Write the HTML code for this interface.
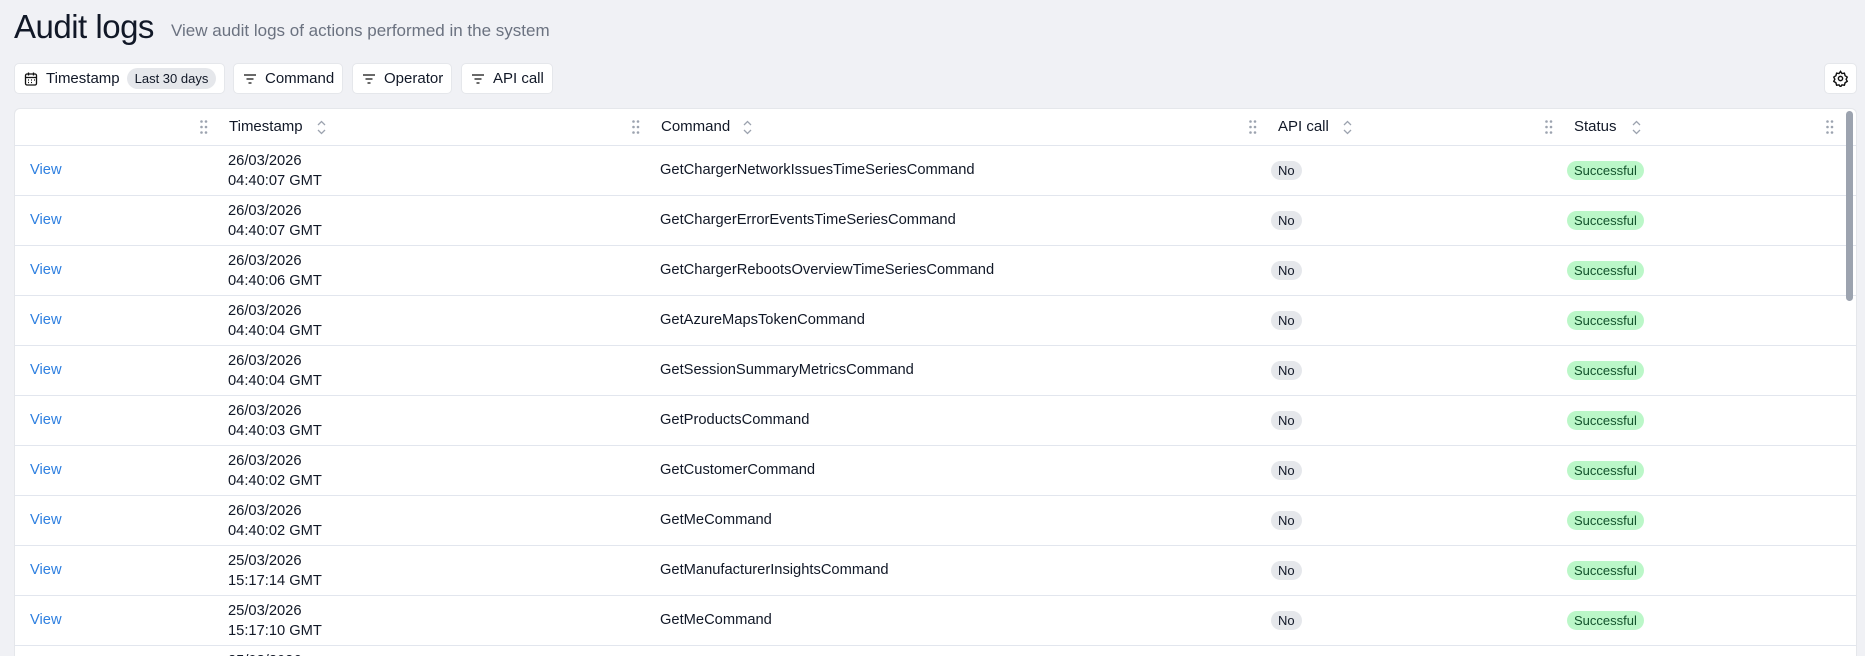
<!DOCTYPE html>
<html><head><meta charset="utf-8"><style>
*{box-sizing:border-box;margin:0;padding:0}
html,body{width:1865px;height:656px;overflow:hidden}
body{background:#f0f1f5;font-family:"Liberation Sans",sans-serif;color:#111827;position:relative}
.title{position:absolute;left:14px;top:8px;font-size:33px;letter-spacing:-0.5px;color:#111827}
.sub{position:absolute;left:171px;top:21px;font-size:17px;color:#6b7280}
.btn{position:absolute;top:63px;height:31px;background:#fff;border:1px solid #e5e7eb;border-radius:5px;display:flex;align-items:center;font-size:15px;padding:0 8px;gap:7px;white-space:nowrap}
.pill{background:#e5e7eb;border-radius:12px;padding:3px 8px;font-size:13px;white-space:nowrap}
.table{position:absolute;left:14px;top:108px;width:1843px;height:548px;background:#fff;border:1px solid #e5e7eb;border-bottom:none;border-radius:6px 6px 0 0;overflow:hidden}
.hdr{height:37px;border-bottom:1px solid #e2e6ee;position:relative;font-size:15px}
.row{height:50px;border-bottom:1px solid #e2e6ee;position:relative;font-size:14.7px}
.c{position:absolute;white-space:nowrap}
.h{top:9px}
.dots{position:absolute;top:11px}
.sort{position:absolute;top:11px}
.view{left:15px;top:16px;color:#2d7fe0}
.ts{left:213px;top:5px;line-height:20px}
.cmd{left:645px;top:16px}
.no{left:1256px;top:15px;background:#e5e7eb;border-radius:10px;padding:2px 7px;font-size:13px}
.ok{left:1552px;top:15px;background:#bbf7c8;color:#14532d;border-radius:10px;padding:2px 7px;font-size:13px}
.sb{position:absolute;right:3px;top:2px;width:7px;height:190px;background:#9ca3af;border-radius:4px}
</style></head><body>
<svg width="0" height="0" style="position:absolute"><defs>
<g id="d" fill="#9ca3af"><circle cx="1.5" cy="1.5" r="1.3"/><circle cx="6" cy="1.5" r="1.3"/><circle cx="1.5" cy="7" r="1.3"/><circle cx="6" cy="7" r="1.3"/><circle cx="1.5" cy="12.5" r="1.3"/><circle cx="6" cy="12.5" r="1.3"/></g>
<g id="s" fill="none" stroke="#9ca3af" stroke-width="1.3"><path d="M2 5l3.5-3.5L9 5M2 10l3.5 3.5L9 10"/></g>
</defs></svg>
<div class="title">Audit logs</div>
<div class="sub">View audit logs of actions performed in the system</div>
<div class="btn" style="left:14px"><svg width="16" height="16" viewBox="0 0 16 16" fill="none" stroke="#111" stroke-width="1.3"><rect x="2.5" y="3" width="11" height="11" rx="1.5"/><path d="M2.5 6.5h11M5.5 1.5v3M10.5 1.5v3M5 9h1M8 9h1M11 9h1M5 11.5h1M8 11.5h1"/></svg>Timestamp<span class="pill">Last 30 days</span></div>
<div class="btn" style="left:233px"><svg width="16" height="16" viewBox="0 0 16 16" stroke="#111" stroke-width="1.3"><path d="M2 4h12M4.5 8h7M6.5 12h3"/></svg>Command</div>
<div class="btn" style="left:352px"><svg width="16" height="16" viewBox="0 0 16 16" stroke="#111" stroke-width="1.3"><path d="M2 4h12M4.5 8h7M6.5 12h3"/></svg>Operator</div>
<div class="btn" style="left:461px"><svg width="16" height="16" viewBox="0 0 16 16" stroke="#111" stroke-width="1.3"><path d="M2 4h12M4.5 8h7M6.5 12h3"/></svg>API call</div>
<div class="btn" style="left:1824px;width:33px;padding:0 7px"><svg width="17" height="17" viewBox="0 0 24 24" fill="none" stroke="#111" stroke-width="2"><circle cx="12" cy="12" r="3"/><path d="M12 2l2 3 3.5-.5 1 3.5 3 2-1.5 3 1.5 3-3 2-1 3.5-3.5-.5-2 3-2-3-3.5.5-1-3.5-3-2 1.5-3-1.5-3 3-2 1-3.5 3.5.5z"/></svg></div>
<div class="table">
<div class="hdr">
<svg class="dots" style="left:185px" width="8" height="14"><use href="#d"/></svg>
<div class="c h" style="left:214px">Timestamp</div><svg class="sort" style="left:301px" width="11" height="15"><use href="#s"/></svg>
<svg class="dots" style="left:617px" width="8" height="14"><use href="#d"/></svg>
<div class="c h" style="left:646px">Command</div><svg class="sort" style="left:727px" width="11" height="15"><use href="#s"/></svg>
<svg class="dots" style="left:1234px" width="8" height="14"><use href="#d"/></svg>
<div class="c h" style="left:1263px">API call</div><svg class="sort" style="left:1327px" width="11" height="15"><use href="#s"/></svg>
<svg class="dots" style="left:1530px" width="8" height="14"><use href="#d"/></svg>
<div class="c h" style="left:1559px">Status</div><svg class="sort" style="left:1616px" width="11" height="15"><use href="#s"/></svg>
<svg class="dots" style="left:1811px" width="8" height="14"><use href="#d"/></svg>
</div>
<div class="row"><span class="c view">View</span><span class="c ts">26/03/2026<br>04:40:07 GMT</span><span class="c cmd">GetChargerNetworkIssuesTimeSeriesCommand</span><span class="c no">No</span><span class="c ok">Successful</span></div>
<div class="row"><span class="c view">View</span><span class="c ts">26/03/2026<br>04:40:07 GMT</span><span class="c cmd">GetChargerErrorEventsTimeSeriesCommand</span><span class="c no">No</span><span class="c ok">Successful</span></div>
<div class="row"><span class="c view">View</span><span class="c ts">26/03/2026<br>04:40:06 GMT</span><span class="c cmd">GetChargerRebootsOverviewTimeSeriesCommand</span><span class="c no">No</span><span class="c ok">Successful</span></div>
<div class="row"><span class="c view">View</span><span class="c ts">26/03/2026<br>04:40:04 GMT</span><span class="c cmd">GetAzureMapsTokenCommand</span><span class="c no">No</span><span class="c ok">Successful</span></div>
<div class="row"><span class="c view">View</span><span class="c ts">26/03/2026<br>04:40:04 GMT</span><span class="c cmd">GetSessionSummaryMetricsCommand</span><span class="c no">No</span><span class="c ok">Successful</span></div>
<div class="row"><span class="c view">View</span><span class="c ts">26/03/2026<br>04:40:03 GMT</span><span class="c cmd">GetProductsCommand</span><span class="c no">No</span><span class="c ok">Successful</span></div>
<div class="row"><span class="c view">View</span><span class="c ts">26/03/2026<br>04:40:02 GMT</span><span class="c cmd">GetCustomerCommand</span><span class="c no">No</span><span class="c ok">Successful</span></div>
<div class="row"><span class="c view">View</span><span class="c ts">26/03/2026<br>04:40:02 GMT</span><span class="c cmd">GetMeCommand</span><span class="c no">No</span><span class="c ok">Successful</span></div>
<div class="row"><span class="c view">View</span><span class="c ts">25/03/2026<br>15:17:14 GMT</span><span class="c cmd">GetManufacturerInsightsCommand</span><span class="c no">No</span><span class="c ok">Successful</span></div>
<div class="row"><span class="c view">View</span><span class="c ts">25/03/2026<br>15:17:10 GMT</span><span class="c cmd">GetMeCommand</span><span class="c no">No</span><span class="c ok">Successful</span></div>
<div class="row"><span class="c view">View</span><span class="c ts">25/03/2026<br>15:17:08 GMT</span><span class="c cmd">GetMeCommand</span><span class="c no">No</span><span class="c ok">Successful</span></div>
<div class="sb"></div>
</div>
</body></html>
